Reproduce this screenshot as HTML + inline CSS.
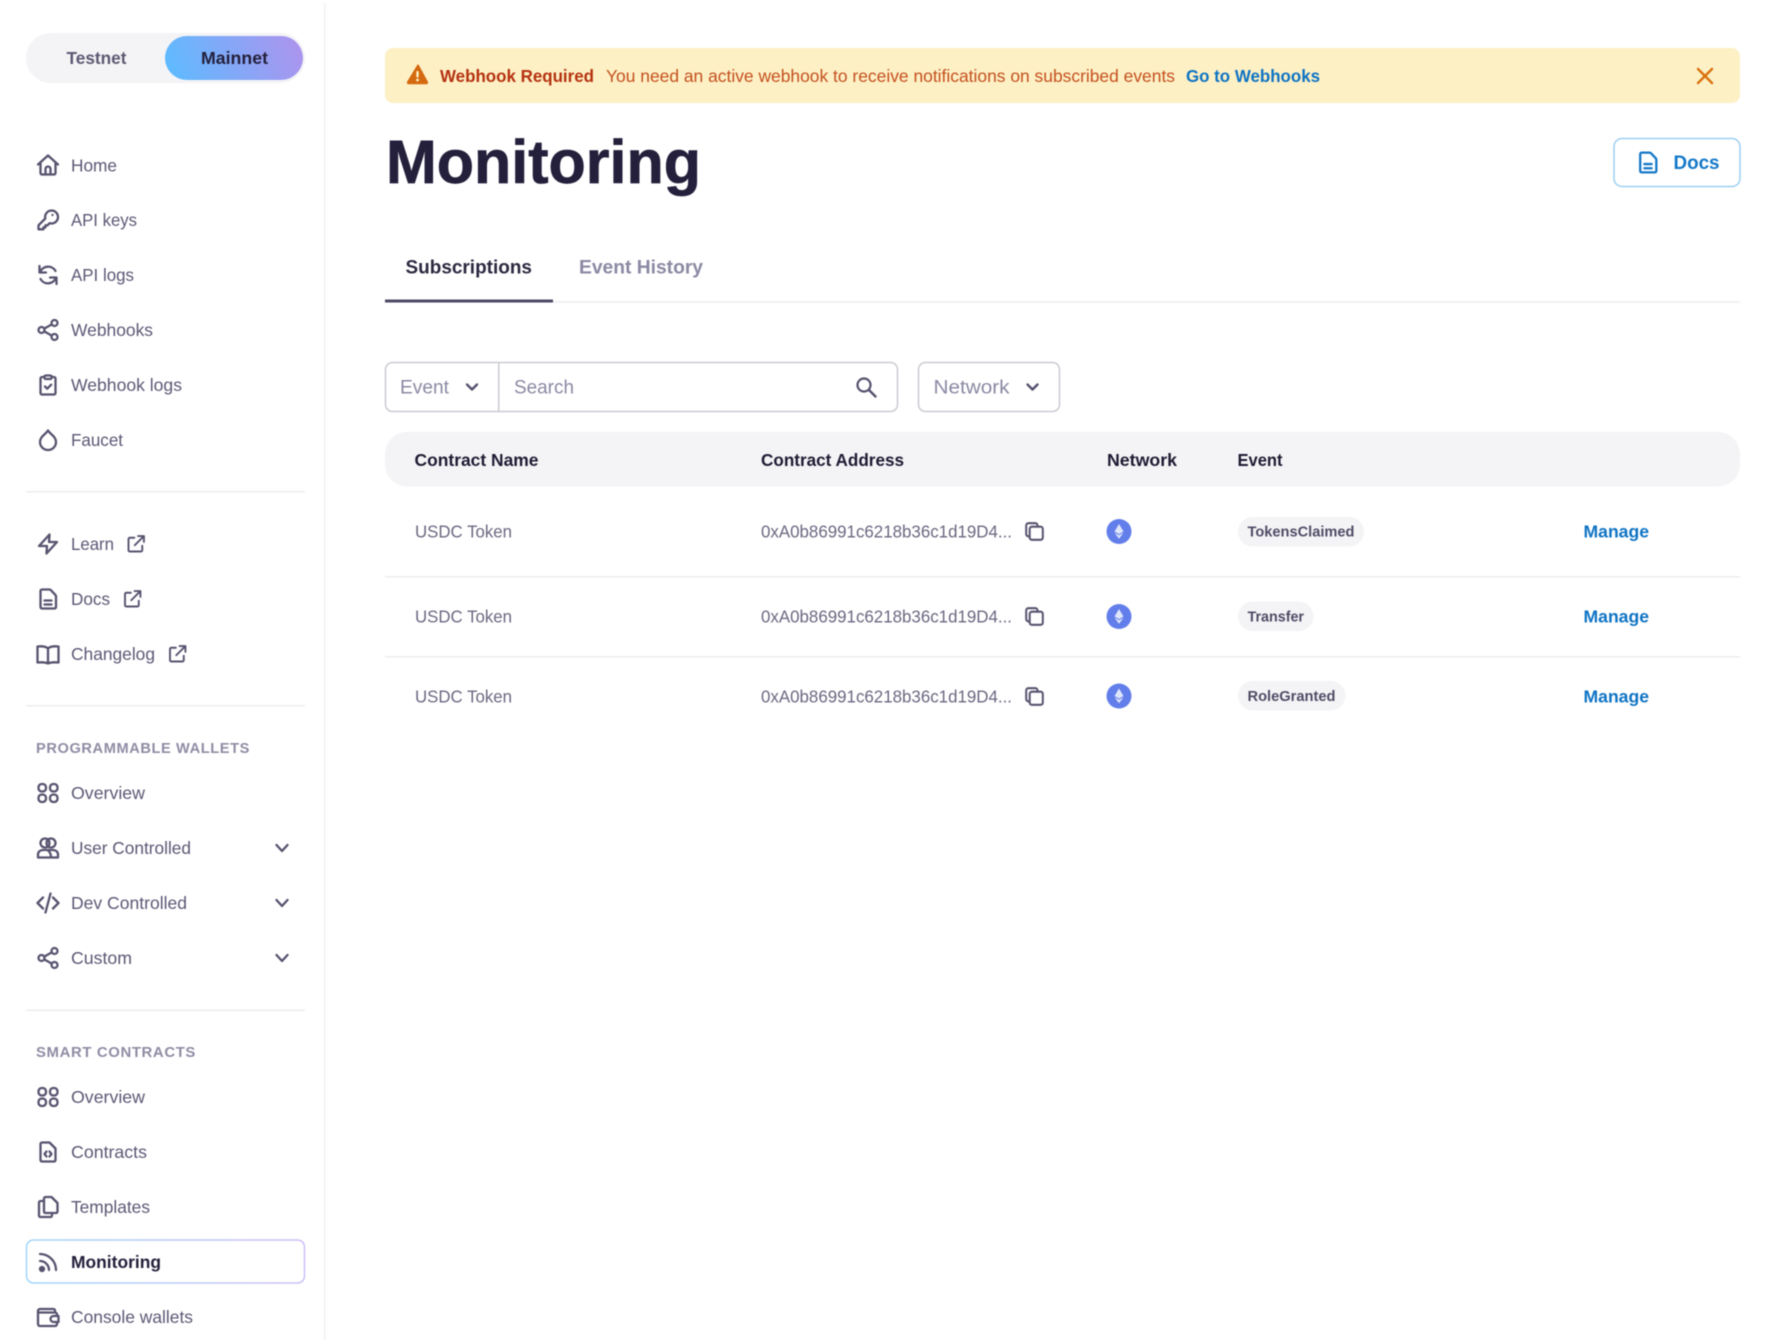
<!DOCTYPE html>
<html lang="en">
<head>
<meta charset="utf-8">
<title>Monitoring</title>
<style>
html,body{margin:0;padding:0;background:#fff;width:1784px;height:1340px;overflow:hidden}
svg{display:block;filter:blur(.45px)}
text{font-family:"Liberation Sans",sans-serif}
.nav{font-size:17.5px;fill:#5c5875}
.sec{font-size:14.5px;font-weight:700;fill:#8f8ca4;letter-spacing:.6px}
.ic{fill:none;stroke:#57536f;stroke-width:2.3;stroke-linecap:round;stroke-linejoin:round}
.th{font-size:17.5px;font-weight:700;fill:#1e1b33}
.td{font-size:17.5px;fill:#6b6880}
.bd{font-size:14.5px;font-weight:700;fill:#4f4b66}
.mg{font-size:17.5px;font-weight:700;fill:#0f74c4}
.ph{font-size:19.5px;fill:#8b89a3}
</style>
</head>
<body>
<svg width="1784" height="1340" viewBox="0 0 1784 1340" xmlns="http://www.w3.org/2000/svg">
<defs>
<linearGradient id="g1" gradientUnits="userSpaceOnUse" x1="175" y1="84" x2="295" y2="32"><stop offset="0" stop-color="#5fbaff"/><stop offset="1" stop-color="#ac94ee"/></linearGradient>
<linearGradient id="g2" gradientUnits="userSpaceOnUse" x1="26" y1="1283" x2="305" y2="1240"><stop offset="0" stop-color="#a2d6fb"/><stop offset="1" stop-color="#cfbff6"/></linearGradient>
<symbol id="home" viewBox="0 0 24 24"><path d="M2 11.5 12 2.500l10 9M4.500 9.500V20a1.500 1.500 0 0 0 1.500 1.500h12a1.500 1.500 0 0 0 1.500-1.500V9.500M9.500 21.500V16a2.500 2.500 0 0 1 5 0v5.500"/></symbol>
<symbol id="key" viewBox="0 0 24 24"><path d="M15.500 2.500a6.500 6.500 0 0 1 0 13 6.500 6.500 0 0 1-1.900-.3L11.500 17.300H9.500v2h-2v2H2.500v-4l6.800-6.800A6.500 6.500 0 0 1 15.500 2.500z"/><path d="M16.500 7h.01"/></symbol>
<symbol id="ref" viewBox="0 0 24 24"><path d="M3.500 3v6.500H10M20.500 21v-6.500H14M4 9.500A8.500 8.500 0 0 1 19.500 8M20 14.500A8.500 8.500 0 0 1 4.500 16"/></symbol>
<symbol id="share" viewBox="0 0 24 24"><circle cx="18.500" cy="5" r="3"/><circle cx="5.500" cy="12" r="3"/><circle cx="18.500" cy="19" r="3"/><path d="M8.200 10.600 15.800 6.400M8.200 13.400l7.600 4.200"/></symbol>
<symbol id="clip" viewBox="0 0 24 24"><path d="M8.500 4H6a1.500 1.500 0 0 0-1.500 1.500V20A1.500 1.500 0 0 0 6 21.500h12a1.500 1.500 0 0 0 1.500-1.500V5.500A1.500 1.500 0 0 0 18 4h-2.500"/><rect x="8.500" y="2.500" width="7" height="3.500" rx="1.200"/><path d="m9 13.500 2.200 2.200 4-4"/></symbol>
<symbol id="drop" viewBox="0 0 24 24"><path d="M12 2.500c2.500 4 8 6 8 11.500a8 8 0 0 1-16 0c0-5.500 5.500-7.500 8-11.500z"/></symbol>
<symbol id="bolt" viewBox="0 0 24 24"><path d="M13.500 2.500 13 10h8l-10.500 11.500.5-7.500H3z"/></symbol>
<symbol id="ext" viewBox="0 0 24 24"><path d="M10 4.500H4.500A1.500 1.500 0 0 0 3 6v13.500A1.500 1.500 0 0 0 4.500 21H18a1.500 1.500 0 0 0 1.500-1.500V14M14.500 2.500h7v7M21.500 2.500l-11 11"/></symbol>
<symbol id="doc" viewBox="0 0 24 24"><path d="M6 2.500h7.500c.5 0 1 .2 1.300.6l4.600 4.800c.4.4.6.9.6 1.400V20a1.500 1.500 0 0 1-1.500 1.500H6A1.500 1.500 0 0 1 4.500 20V4A1.500 1.500 0 0 1 6 2.500z"/><path d="M8.500 13.500h7M8.500 17.500h7"/></symbol>
<symbol id="book" viewBox="0 0 24 24"><path d="M12 6.500C10 4.500 6.500 4 1.500 4.500v16c5-.5 8.500 0 10.500 1 2-1 5.500-1.500 10.500-1v-16C17.500 4 14 4.500 12 6.500zM12 6.500v15"/></symbol>
<symbol id="grid" viewBox="0 0 24 24"><rect x="2.500" y="3" width="7.500" height="7.500" rx="3.300"/><rect x="14" y="3" width="7.500" height="7.500" rx="3.300"/><rect x="2.500" y="13.500" width="7.500" height="7.500" rx="3.300"/><rect x="14" y="13.500" width="7.500" height="7.500" rx="3.300"/></symbol>
<symbol id="users" viewBox="0 0 24 24"><circle cx="9" cy="7" r="4.500"/><circle cx="15" cy="7" r="4.500"/><path d="M2 21.500v-3c0-3 2.500-4.500 5-4.500h10c2.500 0 5 1.500 5 4.500v3zM12 14.500c2 1.500 3 4 3 7"/></symbol>
<symbol id="code" viewBox="0 0 24 24"><path d="M7 6.500 1.500 12 7 17.500M17 6.500l5.500 5.500-5.500 5.500M14.500 2.500l-5 19"/></symbol>
<symbol id="contract" viewBox="0 0 24 24"><path d="M6 2.500h7.500l6 6V20a1.500 1.500 0 0 1-1.500 1.500H6A1.500 1.500 0 0 1 4.500 20V4A1.500 1.500 0 0 1 6 2.500z"/><path d="M10.500 11.500 8.500 14l2 2.500M13.500 11.500l2 2.500-2 2.500"/></symbol>
<symbol id="tpl" viewBox="0 0 24 24"><path d="M9.500 2h6l6 6v8.500A1.500 1.500 0 0 1 20 18H9.500A1.500 1.500 0 0 1 8 16.500v-13A1.500 1.500 0 0 1 9.500 2z"/><path d="M8 6H4.500A1.500 1.500 0 0 0 3 7.500v13A1.500 1.500 0 0 0 4.500 22h10a1.500 1.500 0 0 0 1.500-1.500V18"/></symbol>
<symbol id="rss" viewBox="0 0 24 24"><circle cx="6" cy="19" r="2" fill="#57536f"/><path d="M4 11a9 9 0 0 1 9 9M4 4a16 16 0 0 1 16 16"/></symbol>
<symbol id="wallet" viewBox="0 0 24 24"><path d="M19 7V5.500A1.500 1.500 0 0 0 17.500 4H4a2 2 0 0 0-2 2v13a2 2 0 0 0 2 2h15a2 2 0 0 0 2-2v-2M2 7.500h17a2 2 0 0 1 2 2V11"/><path d="M21 11h-3.500a3 3 0 0 0 0 6H22.500v-6z"/></symbol>
<symbol id="copy" viewBox="0 0 24 24"><path d="M6 17.500H5A2.500 2.500 0 0 1 2.500 15V5A2.500 2.500 0 0 1 5 2.500h8A2.500 2.500 0 0 1 15.500 5v1"/><rect x="6.500" y="6.500" width="15" height="15" rx="2.500"/></symbol>
</defs>

<rect width="1784" height="1340" fill="#fff"/>

<!-- sidebar -->
<rect x="324" y="3" width="1.500" height="1337" fill="#f1f1f4"/>
<rect x="26" y="33" width="279" height="50" rx="25" fill="#f4f4f6"/>
<rect x="165" y="36" width="138" height="44" rx="22" fill="url(#g1)"/>
<text x="66.500" y="64" font-size="17.500" font-weight="700" fill="#5d5973" textLength="60" lengthAdjust="spacingAndGlyphs">Testnet</text>
<text x="201" y="64" font-size="17.500" font-weight="700" fill="#24203c" textLength="67" lengthAdjust="spacingAndGlyphs">Mainnet</text>

<rect x="26.500" y="1240" width="278" height="43" rx="7" fill="#fff" stroke="url(#g2)" stroke-width="1.500"/>

<g class="ic">
<use href="#home" x="36" y="153" width="24" height="24"/>
<use href="#key" x="36" y="208" width="24" height="24"/>
<use href="#ref" x="36" y="263" width="24" height="24"/>
<use href="#share" x="36" y="318" width="24" height="24"/>
<use href="#clip" x="36" y="373" width="24" height="24"/>
<use href="#drop" x="36" y="428" width="24" height="24"/>
<use href="#bolt" x="36" y="532" width="24" height="24"/>
<use href="#ext" x="126" y="534" width="20" height="20"/>
<use href="#doc" x="36" y="587" width="24" height="24"/>
<use href="#ext" x="122.500" y="589" width="20" height="20"/>
<use href="#book" x="36" y="642" width="24" height="24"/>
<use href="#ext" x="167.500" y="644" width="20" height="20"/>
<use href="#grid" x="36" y="781" width="24" height="24"/>
<use href="#users" x="36" y="836" width="24" height="24"/>
<use href="#code" x="36" y="891" width="24" height="24"/>
<use href="#share" x="36" y="946" width="24" height="24"/>
<use href="#grid" x="36" y="1085" width="24" height="24"/>
<use href="#contract" x="36" y="1140" width="24" height="24"/>
<use href="#tpl" x="36" y="1195" width="24" height="24"/>
<use href="#rss" x="36" y="1250" width="24" height="24"/>
<use href="#wallet" x="36" y="1305" width="24" height="24"/>
<path d="M276.500 845 282 851l5.500-6M276.500 900 282 906l5.500-6M276.500 955 282 961l5.500-6"/>
</g>

<text class="nav" x="71" y="171.500" textLength="46" lengthAdjust="spacingAndGlyphs">Home</text>
<text class="nav" x="71" y="226" textLength="66" lengthAdjust="spacingAndGlyphs">API keys</text>
<text class="nav" x="71" y="281" textLength="63" lengthAdjust="spacingAndGlyphs">API logs</text>
<text class="nav" x="71" y="336" textLength="82" lengthAdjust="spacingAndGlyphs">Webhooks</text>
<text class="nav" x="71" y="391" textLength="111" lengthAdjust="spacingAndGlyphs">Webhook logs</text>
<text class="nav" x="71" y="446" textLength="52" lengthAdjust="spacingAndGlyphs">Faucet</text>

<rect x="26" y="491" width="279" height="1.500" fill="#eeeef1"/>

<text class="nav" x="71" y="550" textLength="43" lengthAdjust="spacingAndGlyphs">Learn</text>
<text class="nav" x="71" y="605" textLength="39" lengthAdjust="spacingAndGlyphs">Docs</text>
<text class="nav" x="71" y="660" textLength="84" lengthAdjust="spacingAndGlyphs">Changelog</text>

<rect x="26" y="705" width="279" height="1.500" fill="#eeeef1"/>

<text class="sec" x="36" y="753" textLength="214" lengthAdjust="spacingAndGlyphs">PROGRAMMABLE WALLETS</text>
<text class="nav" x="71" y="799" textLength="74" lengthAdjust="spacingAndGlyphs">Overview</text>
<text class="nav" x="71" y="854" textLength="120" lengthAdjust="spacingAndGlyphs">User Controlled</text>
<text class="nav" x="71" y="909" textLength="116" lengthAdjust="spacingAndGlyphs">Dev Controlled</text>
<text class="nav" x="71" y="964" textLength="61" lengthAdjust="spacingAndGlyphs">Custom</text>

<rect x="26" y="1009.500" width="279" height="1.500" fill="#eeeef1"/>

<text class="sec" x="36" y="1057" textLength="160" lengthAdjust="spacingAndGlyphs">SMART CONTRACTS</text>
<text class="nav" x="71" y="1103" textLength="74" lengthAdjust="spacingAndGlyphs">Overview</text>
<text class="nav" x="71" y="1158" textLength="76" lengthAdjust="spacingAndGlyphs">Contracts</text>
<text class="nav" x="71" y="1213" textLength="79" lengthAdjust="spacingAndGlyphs">Templates</text>
<text x="71" y="1268" font-size="17.500" font-weight="700" fill="#24203c" textLength="90" lengthAdjust="spacingAndGlyphs">Monitoring</text>
<text class="nav" x="71" y="1323" textLength="122" lengthAdjust="spacingAndGlyphs">Console wallets</text>

<!-- banner -->
<rect x="385" y="48" width="1355" height="55" rx="8" fill="#fdf0c5"/>
<path d="M417.500 65.500 407.500 82a1.200 1.200 0 0 0 1 1.800h18a1.200 1.200 0 0 0 1-1.800l-9-16.500a.5.5 0 0 0-1 0z" fill="#d4690f" stroke="#d4690f" stroke-width="1" stroke-linejoin="round"/>
<rect x="416.300" y="71" width="2.400" height="6.500" rx="1" fill="#fdf0c5"/>
<circle cx="417.500" cy="80" r="1.400" fill="#fdf0c5"/>
<text x="440" y="82" font-size="17.500" font-weight="700" fill="#b53210" textLength="154" lengthAdjust="spacingAndGlyphs">Webhook Required</text>
<text x="606" y="82" font-size="17.500" fill="#c4501e" textLength="569" lengthAdjust="spacingAndGlyphs">You need an active webhook to receive notifications on subscribed events</text>
<text x="1186" y="82" font-size="17.500" font-weight="700" fill="#0f74c4" textLength="134" lengthAdjust="spacingAndGlyphs">Go to Webhooks</text>
<path d="M1698 69l14 14M1712 69l-14 14" fill="none" stroke="#d9740f" stroke-width="2.500" stroke-linecap="round"/>

<!-- title -->
<text x="386" y="183" font-size="61" font-weight="700" fill="#24203c" stroke="#24203c" stroke-width=".7" textLength="315" lengthAdjust="spacingAndGlyphs">Monitoring</text>

<!-- docs button -->
<rect x="1614" y="138.500" width="126" height="48" rx="8" fill="#fff" stroke="#9ccff2" stroke-width="1.500"/>
<use href="#doc" x="1635.500" y="150" width="25" height="25" fill="none" stroke="#1478c8" stroke-width="2.200" stroke-linecap="round" stroke-linejoin="round"/>
<text x="1673.500" y="169" font-size="19.500" font-weight="700" fill="#1478c8" textLength="46" lengthAdjust="spacingAndGlyphs">Docs</text>

<!-- tabs -->
<rect x="385" y="301" width="1355" height="2" fill="#f1f1f4"/>
<rect x="385" y="299.500" width="168" height="3" fill="#4f4b68"/>
<text x="405.500" y="273.500" font-size="19.500" font-weight="700" fill="#2c2840" textLength="126.500" lengthAdjust="spacingAndGlyphs">Subscriptions</text>
<text x="579" y="273.500" font-size="19.500" font-weight="700" fill="#8b89a3" textLength="124" lengthAdjust="spacingAndGlyphs">Event History</text>

<!-- filters -->
<rect x="385.500" y="362.500" width="512" height="49" rx="7" fill="#fff" stroke="#cbcbd3" stroke-width="1.500"/>
<rect x="498" y="363" width="1.500" height="48" fill="#cbcbd3"/>
<text class="ph" x="400" y="393.500" textLength="49" lengthAdjust="spacingAndGlyphs">Event</text>
<path d="M467 384.500l5 5 5-5" fill="none" stroke="#55516e" stroke-width="2.400" stroke-linecap="round" stroke-linejoin="round"/>
<text class="ph" x="514" y="393.500" textLength="60" lengthAdjust="spacingAndGlyphs">Search</text>
<circle cx="864" cy="385" r="6.500" fill="none" stroke="#55516e" stroke-width="2.200"/>
<path d="M869 390l6.500 6.500" stroke="#55516e" stroke-width="2.400" stroke-linecap="round"/>
<rect x="918.500" y="362.500" width="141" height="49" rx="7" fill="#fff" stroke="#cbcbd3" stroke-width="1.500"/>
<text class="ph" x="933.500" y="393.500" textLength="76" lengthAdjust="spacingAndGlyphs">Network</text>
<path d="M1027.500 384.500l5 5 5-5" fill="none" stroke="#55516e" stroke-width="2.400" stroke-linecap="round" stroke-linejoin="round"/>

<!-- table -->
<rect x="385" y="432" width="1355" height="54.500" rx="22" fill="#f4f4f6"/>
<text class="th" x="414.500" y="466" textLength="124" lengthAdjust="spacingAndGlyphs">Contract Name</text>
<text class="th" x="761" y="466" textLength="143" lengthAdjust="spacingAndGlyphs">Contract Address</text>
<text class="th" x="1107" y="466" textLength="70" lengthAdjust="spacingAndGlyphs">Network</text>
<text class="th" x="1237.500" y="466" textLength="45" lengthAdjust="spacingAndGlyphs">Event</text>

<rect x="385" y="576" width="1355" height="1.500" fill="#eeeef1"/>
<rect x="385" y="656" width="1355" height="1.500" fill="#eeeef1"/>

<!-- row 1 -->
<text class="td" x="415" y="537.500" textLength="97" lengthAdjust="spacingAndGlyphs">USDC Token</text>
<text class="td" x="761" y="537.500" textLength="251" lengthAdjust="spacingAndGlyphs">0xA0b86991c6218b36c1d19D4...</text>
<use href="#copy" class="ic" x="1024" y="521" width="21" height="21" stroke="#6f6c85"/>
<circle cx="1119" cy="531.500" r="12.500" fill="#627eea"/>
<path d="M1119 524l-4.500 7.500 4.500 2.600 4.500-2.600zM1114.500 532.700l4.500 6 4.500-6-4.500 2.600z" fill="#dfe5fb"/>
<rect x="1238" y="517" width="126" height="29.500" rx="14.700" fill="#f4f4f6"/>
<text class="bd" x="1247.500" y="536.500" textLength="107" lengthAdjust="spacingAndGlyphs">TokensClaimed</text>
<text class="mg" x="1583.500" y="537.500" textLength="65.500" lengthAdjust="spacingAndGlyphs">Manage</text>

<!-- row 2 -->
<text class="td" x="415" y="622.500" textLength="97" lengthAdjust="spacingAndGlyphs">USDC Token</text>
<text class="td" x="761" y="622.500" textLength="251" lengthAdjust="spacingAndGlyphs">0xA0b86991c6218b36c1d19D4...</text>
<use href="#copy" class="ic" x="1024" y="606" width="21" height="21" stroke="#6f6c85"/>
<circle cx="1119" cy="616.500" r="12.500" fill="#627eea"/>
<path d="M1119 609l-4.500 7.500 4.500 2.600 4.500-2.600zM1114.500 617.700l4.500 6 4.500-6-4.500 2.600z" fill="#dfe5fb"/>
<rect x="1238" y="601.500" width="75.500" height="29.500" rx="14.700" fill="#f4f4f6"/>
<text class="bd" x="1247.500" y="621.500" textLength="56.500" lengthAdjust="spacingAndGlyphs">Transfer</text>
<text class="mg" x="1583.500" y="622.500" textLength="65.500" lengthAdjust="spacingAndGlyphs">Manage</text>

<!-- row 3 -->
<text class="td" x="415" y="702.500" textLength="97" lengthAdjust="spacingAndGlyphs">USDC Token</text>
<text class="td" x="761" y="702.500" textLength="251" lengthAdjust="spacingAndGlyphs">0xA0b86991c6218b36c1d19D4...</text>
<use href="#copy" class="ic" x="1024" y="686" width="21" height="21" stroke="#6f6c85"/>
<circle cx="1119" cy="696" r="12.500" fill="#627eea"/>
<path d="M1119 688.500l-4.500 7.500 4.500 2.600 4.500-2.600zM1114.500 697.200l4.500 6 4.500-6-4.500 2.600z" fill="#dfe5fb"/>
<rect x="1238" y="681" width="107.500" height="29.500" rx="14.700" fill="#f4f4f6"/>
<text class="bd" x="1247.500" y="701" textLength="88" lengthAdjust="spacingAndGlyphs">RoleGranted</text>
<text class="mg" x="1583.500" y="702.500" textLength="65.500" lengthAdjust="spacingAndGlyphs">Manage</text>
</svg>
</body>
</html>
